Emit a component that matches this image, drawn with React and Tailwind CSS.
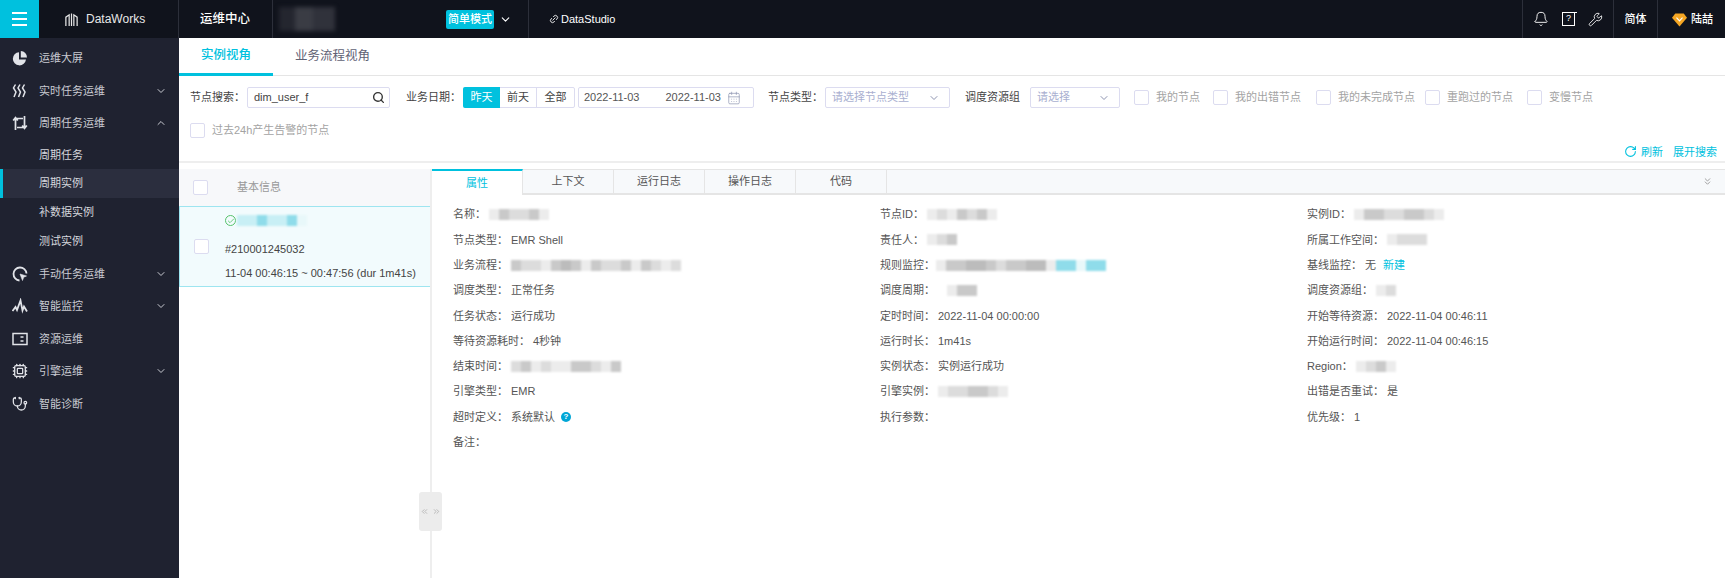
import React from "react";
import { Bell, Wrench, Search, ChevronDown, ChevronUp, ChevronsDown, ChevronsLeft, ChevronsRight, RotateCw, Cpu, Stethoscope, CalendarDays, Check, Link2 } from "lucide-react";

// blurred-out values in the reference: a strip of grey mosaic blocks
const Mosaic = ({ cells, size = "h-[11px]", className = "" }) => (
  <div className={`flex blur-[1px] ${size} ${className}`}>
    {cells.map((c, i) => (
      <div key={i} className={`w-[10px] h-full ${c}`} />
    ))}
  </div>
);

const g1 = "bg-[#ececec]";
const g2 = "bg-[#dcdcdc]";
const g3 = "bg-[#c9c9c9]";
const g4 = "bg-[#bcbcbc]";
const c1 = "bg-[#8fdcea]";
const c2 = "bg-[#c8eff5]";
const c3 = "bg-[#e8f8fa]";

const Pie = () => (
  <svg viewBox="0 0 16 16" className="w-[16px] h-[16px]" fill="#e1e3e8">
    <path d="M7 2.200a6.600 6.600 0 1 0 7 7.400H7z" />
    <path d="M8.800 1a6.400 6.400 0 0 1 6.200 6.600H8.800z" />
  </svg>
);
const Heat = () => (
  <svg viewBox="0 0 16 16" className="w-[16px] h-[16px]" fill="none" stroke="#e1e3e8" strokeWidth="1.500">
    <path d="M3.500 1.500 1.500 5l2.500 4-2 5M8 1.500 6 5l2.500 4-2 5M12.500 1.500 10.500 5l2.500 4-2 5" />
  </svg>
);
const Cycle = () => (
  <svg viewBox="0 0 16 16" className="w-[16px] h-[16px]" fill="none" stroke="#e1e3e8" strokeWidth="1.700">
    <path d="M3.500 15V3.500H11M1.200 5.500l2.300-2.800 2.300 2.800" />
    <path d="M12.500 1v11.500H5M10.200 10.500l2.300 2.800 2.300-2.800" />
  </svg>
);
const Manual = () => (
  <svg viewBox="0 0 16 16" className="w-[16px] h-[16px]" fill="none" stroke="#e1e3e8" strokeWidth="1.800">
    <path d="M14.500 7.500A6.500 6.500 0 1 0 7.500 14.500" />
    <path d="M8 8l6.500 2-2.800 1.200L10.500 14.500z" fill="#e1e3e8" strokeWidth="0.600" />
  </svg>
);
const Pulse = () => (
  <svg viewBox="0 0 16 16" className="w-[16px] h-[16px]" fill="none" stroke="#e1e3e8" strokeWidth="1.800">
    <path d="M.5 13 3.500 9l1.500 3L8.500 2.500l2 10L12 8.500l3 5" />
  </svg>
);
const Resource = () => (
  <svg viewBox="0 0 16 16" className="w-[16px] h-[16px]" fill="none" stroke="#e1e3e8" strokeWidth="1.500">
    <rect x="1" y="2.500" width="14" height="11" />
    <path d="M8.500 6h3M8.500 10h3" strokeWidth="1.700" />
  </svg>
);
const Diamond = () => (
  <svg viewBox="0 0 16 16" className="w-[15px] h-[15px]">
    <path d="M3.500 1.500h9L16 6l-8 9.500L0 6z" fill="#f5a623" />
    <path d="M4.800 6 8 9.500 11.200 6" fill="none" stroke="#fff" strokeWidth="1.200" />
  </svg>
);
const HelpDoc = () => (
  <span className="relative w-[13px] h-[14px] border border-white border-t-0 text-[9px] leading-[13px] text-center">
    ?
    <span className="absolute -left-px -right-[3px] -top-0 h-px bg-white" />
  </span>
);

const menu = [
  { icon: <Pie />, label: "运维大屏" },
  { icon: <Heat />, label: "实时任务运维", arrow: "down" },
  { icon: <Cycle />, label: "周期任务运维", arrow: "up" },
  { label: "周期任务", sub: true, extra: "mt-px" },
  { label: "周期实例", sub: true, active: true },
  { label: "补数据实例", sub: true },
  { label: "测试实例", sub: true, extra: "mb-[2px]" },
  { icon: <Manual />, label: "手动任务运维", arrow: "down" },
  { icon: <Pulse />, label: "智能监控", arrow: "down" },
  { icon: <Resource />, label: "资源运维" },
  { icon: <Cpu size={16} strokeWidth={1.900} color="#e1e3e8" />, label: "引擎运维", arrow: "down" },
  { icon: <Stethoscope size={16} strokeWidth={1.900} color="#e1e3e8" />, label: "智能诊断" },
];

const Box = () => <span className="block w-[15px] h-[15px] bg-white border border-[#dcdcf0] rounded-[2px] shrink-0" />;

const CheckItem = ({ label, className = "" }) => (
  <div className={`flex items-center gap-[7px] ${className}`}>
    <Box />
    <span className="text-[#a3a3a3]">{label}</span>
  </div>
);

const Select = ({ placeholder, className }) => (
  <div className={`h-[21px] flex items-center justify-between pl-[6px] pr-[9px] border border-[#dcdcf0] rounded-[2px] ${className}`}>
    <span className="text-[#a9afd0]">{placeholder}</span>
    <ChevronDown size={12} color="#8d93b0" />
  </div>
);

const Detail = ({ label, value, mosaic, shift, children }) => (
  <div className="h-[25.3px] flex items-center gap-[3px] whitespace-nowrap">
    <span className="text-[#555]">{label}：</span>
    {value && <span className="text-[#555]">{value}</span>}
    {mosaic && <Mosaic cells={mosaic} className={shift} />}
    {children}
  </div>
);

const col1 = [
  { label: "名称", mosaic: [g1, g3, g2, g2, g3, g1] },
  { label: "节点类型", value: "EMR Shell" },
  { label: "业务流程", mosaic: [g3, g2, g2, g1, g3, g4, g3, g1, g3, g2, g2, g3, g1, g3, g2, g1, g2] },
  { label: "调度类型", value: "正常任务" },
  { label: "任务状态", value: "运行成功" },
  { label: "等待资源耗时", value: "4秒钟" },
  { label: "结束时间", mosaic: [g2, g3, g1, g2, g1, g1, g3, g3, g2, g1, g3] },
  { label: "引擎类型", value: "EMR" },
  { label: "超时定义", value: "系统默认", help: true },
  { label: "备注" },
];
const col2 = [
  { label: "节点ID", mosaic: [g1, g2, g1, g3, g2, g3, g1] },
  { label: "责任人", mosaic: [g1, g2, g3] },
  { label: "规则监控", mosaic: [g1, g3, g3, g4, g4, g3, g2, g3, g3, g4, g4, g1, c1, c1, c3, c1, c1], shift: "-ml-[2px]" },
  { label: "调度周期", mosaic: [g1, g3, g3], shift: "ml-[9px]" },
  { label: "定时时间", value: "2022-11-04 00:00:00" },
  { label: "运行时长", value: "1m41s" },
  { label: "实例状态", value: "实例运行成功" },
  { label: "引擎实例", mosaic: [g1, g2, g2, g3, g3, g2, g1] },
  { label: "执行参数" },
];
const col3 = [
  { label: "实例ID", mosaic: [g1, g3, g3, g2, g2, g3, g3, g2, g1] },
  { label: "所属工作空间", mosaic: [g1, g2, g2, g2] },
  { label: "基线监控", value: "无", link: "新建" },
  { label: "调度资源组", mosaic: [g1, g2] },
  { label: "开始等待资源", value: "2022-11-04 00:46:11" },
  { label: "开始运行时间", value: "2022-11-04 00:46:15" },
  { label: "Region", mosaic: [g1, g2, g3, g1] },
  { label: "出错是否重试", value: "是" },
  { label: "优先级", value: "1" },
];

const renderCol = (rows) =>
  rows.map((r) => (
    <Detail key={r.label} label={r.label} value={r.value} mosaic={r.mosaic} shift={r.shift}>
      {r.link && <span className="ml-[4px] text-[#00c1de]">{r.link}</span>}
      {r.help && (
        <span className="ml-[3px] w-[10px] h-[10px] rounded-full bg-[#00a6d6] text-white text-[8px] leading-[10px] text-center font-bold">?</span>
      )}
    </Detail>
  ));

const tabs = ["属性", "上下文", "运行日志", "操作日志", "代码"];

const App = () => {
  return (
    <div className="h-[578px] w-full overflow-hidden flex flex-col bg-white text-[11px] [font-family:'Liberation_Sans','Noto_Sans_CJK_SC',sans-serif]">
      {/* top bar */}
      <header className="h-[38px] shrink-0 flex items-center bg-[#10131c] text-white">
        <div className="w-[39px] h-full bg-[#00c1de] flex flex-col items-center justify-center gap-[4px]">
          <span className="w-[15px] h-[2px] bg-white" />
          <span className="w-[15px] h-[2px] bg-white" />
          <span className="w-[15px] h-[2px] bg-white" />
        </div>
        <div className="w-[140px] h-full flex items-center pl-[25px] gap-[7px] border-r border-[#2c2f3a]">
          <svg viewBox="0 0 16 16" className="w-[15px] h-[15px]" fill="none" stroke="#e8e8e8" strokeWidth="1.300">
            <path d="M2 15V5.500L5.500 3v12M8 15V1.500M10.500 15V3L14 5.500V15" />
          </svg>
          <span className="text-[12px] font-medium text-[#e8e8e8]">DataWorks</span>
        </div>
        <div className="w-[94px] h-full flex items-center pl-[21px] border-r border-[#2c2f3a] text-[12.5px] font-medium">运维中心</div>
        <div className="w-[70px] h-[24px] ml-[6px] flex blur-[2px]">
          <div className="w-[16px] bg-[#24262f]" />
          <div className="w-[18px] bg-[#3a3c44]" />
          <div className="w-[22px] bg-[#30323b]" />
        </div>
        <div className="ml-[97px] h-[19px] px-[2px] flex items-center bg-[#00c1de] rounded-[2px] text-[11px] font-medium">简单模式</div>
        <ChevronDown size={13} className="ml-[5px]" />
        <div className="ml-[16px] h-full flex items-center pl-[20px] border-l border-[#2c2f3a] gap-[2px]">
          <Link2 size={10} className="-rotate-45" />
          <span className="text-[11px]">DataStudio</span>
        </div>
        <div className="ml-auto h-full flex items-center border-l border-[#2c2f3a]">
          <div className="w-[90px] h-full flex items-center justify-center gap-[13px]">
            <Bell size={16} strokeWidth={1.400} />
            <HelpDoc />
            <Wrench size={15} strokeWidth={1.400} />
          </div>
          <div className="w-[44px] h-full flex items-center justify-center border-l border-[#2c2f3a] font-medium">简体</div>
          <div className="w-[68px] h-full flex items-center pl-[14px] gap-[4px] border-l border-[#2c2f3a] font-medium">
            <Diamond />
            <span>陆喆</span>
          </div>
        </div>
      </header>

      <div className="flex-1 flex min-h-0">
        {/* side menu */}
        <aside className="w-[179px] shrink-0 bg-[#1f2230] text-[#c9cbd2] pt-[4px]">
          {menu.map((m) => (
            <div
              key={m.label}
              className={`relative flex items-center pl-[39px] pr-[12px] ${m.sub ? "h-[28.800px]" : "h-[32.500px]"} ${m.active ? "bg-[#2b2e3e]" : ""} ${m.extra || ""}`}
            >
              {m.active && <span className="absolute left-0 top-0 bottom-0 w-[3px] bg-[#00c1de]" />}
              {m.icon && <span className="absolute left-[12px] top-[8px]">{m.icon}</span>}
              <span className={`flex-1 ${m.sub ? "text-[#d5d7dc]" : ""}`}>{m.label}</span>
              {m.arrow === "down" && <ChevronDown size={12} />}
              {m.arrow === "up" && <ChevronUp size={12} />}
            </div>
          ))}
        </aside>

        <main className="flex-1 min-w-0 flex flex-col relative">
          {/* view tabs */}
          <div className="h-[38px] shrink-0 flex border-b border-[#e5e5e5] text-[12.500px]">
            <div className="w-[94px] flex items-center justify-center text-[#00c1de] font-medium border-b-[3px] border-[#00c1de] -mb-px">实例视角</div>
            <div className="ml-[22px] flex items-center text-[#5f6275]">业务流程视角</div>
          </div>

          {/* filters */}
          <div className="pl-[11px] pr-[8px] h-[87px] shrink-0 border-b-2 border-[#eeeeee]">
            <div className="flex items-center h-[21px] mt-[11px] whitespace-nowrap text-[#444]">
              <span className="w-[57px]">节点搜索：</span>
              <div className="w-[143px] h-[21px] flex items-center justify-between pl-[6px] pr-[4px] border border-[#dcdcf0] rounded-[2px] text-[#444]">
                dim_user_f
                <Search size={13} strokeWidth={2.500} color="#333" />
              </div>
              <span className="ml-[16px] w-[57px]">业务日期：</span>
              <div className="flex h-[21px] border border-[#dcdcf0] rounded-[2px]">
                <span className="w-[37px] flex items-center justify-center bg-[#00c1de] text-white -my-px -ml-px rounded-l-[2px]">昨天</span>
                <span className="w-[37px] flex items-center justify-center border-r border-[#dcdcf0]">前天</span>
                <span className="w-[37px] flex items-center justify-center">全部</span>
              </div>
              <div className="ml-[3px] w-[176px] h-[21px] flex items-center pl-[5px] border border-[#dcdcf0] rounded-[2px] text-[#555]">
                <span>2022-11-03</span>
                <span className="ml-[26px]">2022-11-03</span>
                <CalendarDays size={14} strokeWidth={1.200} color="#8d93b0" className="ml-[6px]" />
              </div>
              <span className="ml-[14px] w-[57px]">节点类型：</span>
              <Select placeholder="请选择节点类型" className="w-[125px]" />
              <span className="ml-[15px] w-[56px]">调度资源组</span>
              <Select placeholder="请选择" className="ml-[9px] w-[90px]" />
              <CheckItem label="我的节点" className="ml-[14px]" />
              <CheckItem label="我的出错节点" className="ml-[13px]" />
              <CheckItem label="我的未完成节点" className="ml-[15px]" />
              <CheckItem label="重跑过的节点" className="ml-[10px]" />
              <CheckItem label="变慢节点" className="ml-[14px]" />
            </div>
            <CheckItem label="过去24h产生告警的节点" className="mt-[14px]" />
            <div className="flex justify-end items-center mt-[5px] text-[#00c1de] whitespace-nowrap">
              <RotateCw size={13} strokeWidth={2} />
              <span className="ml-[4px]">刷新</span>
              <span className="ml-[10px]">展开搜索</span>
            </div>
          </div>

          {/* list + detail */}
          <div className="flex-1 min-h-0 flex mt-[6px]">
            <div className="w-[252px] shrink-0">
              <div className="h-[37px] flex items-center pl-[14px] bg-[#f7f8fa]">
                <Box />
                <span className="ml-[29px] text-[#999]">基本信息</span>
              </div>
              <div className="h-[81px] flex items-center pl-[14px] bg-[#f2fbfd] border border-[#9ee5f0]">
                <Box />
                <div className="ml-[16px] flex flex-col">
                  <div className="h-[22px] -mt-[2px] flex items-center gap-[1px]">
                    <span className="w-[11px] h-[11px] rounded-full border border-[#55c26a] flex items-center justify-center">
                      <Check size={8} strokeWidth={2.500} color="#55c26a" />
                    </span>
                    <Mosaic cells={[c2, c2, c1, c2, c2, c1, c3]} />
                  </div>
                  <span className="mt-[9px] text-[#444]">#210001245032</span>
                  <span className="mt-[8px] text-[#444]">11-04 00:46:15 ~ 00:47:56 (dur 1m41s)</span>
                </div>
              </div>
            </div>
            <div className="flex-1 min-w-0 -ml-px flex flex-col border-l-2 border-[#eeeeee]">
              <div className="h-[26px] shrink-0 flex bg-[#f7f9fb] border-t border-b-2 border-[#e5e5e5]">
                {tabs.map((t, i) => (
                  <div
                    key={t}
                    className={`w-[91px] flex items-center justify-center border-r border-[#e5e5e5] ${
                      i === 0 ? "bg-white text-[#00c1de] border-t-2 border-t-[#00c1de] -mt-px -mb-[2px]" : "text-[#555]"
                    }`}
                  >
                    {t}
                  </div>
                ))}
                <ChevronsDown size={11} color="#999" className="ml-auto mr-[12px] self-center" />
              </div>
              <div className="grid grid-cols-[427px_427px_1fr] pl-[21px] pt-[7px]">
                <div>{renderCol(col1)}</div>
                <div>{renderCol(col2)}</div>
                <div>{renderCol(col3)}</div>
              </div>
            </div>
          </div>

          {/* splitter handle sits over the divider */}
          <div className="absolute left-[240px] top-[454px] w-[23px] h-[39px] bg-[#ececec] rounded-[3px] flex items-center justify-between px-[1px]">
            <ChevronsLeft size={9} color="#aaa" />
            <ChevronsRight size={9} color="#aaa" />
          </div>
        </main>
      </div>
    </div>
  );
};

export default App;
